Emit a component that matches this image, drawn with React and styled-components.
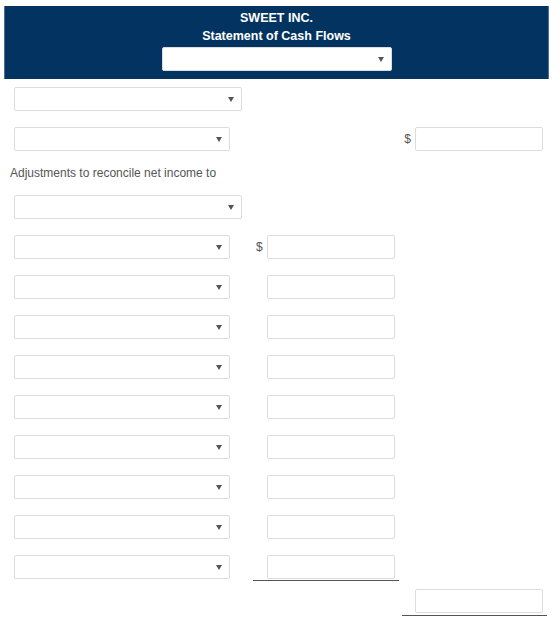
import React from "react";
import styled, { createGlobalStyle } from "styled-components";

const adjustmentRows = 9;

const App = () => {
  return (
    <Page>
      <GlobalStyle />
      <Header>
        <Title>SWEET INC.</Title>
        <Title>Statement of Cash Flows</Title>
        <Dropdown $width={230} $center />
      </Header>

      <Body>
        <Row $top={8}>
          <Dropdown $width={228} />
        </Row>

        <Row>
          <Dropdown $width={216} />
          <span />
          <span />
          <Dollar>$</Dollar>
          <Field />
        </Row>

        <Note>Adjustments to reconcile net income to</Note>

        <Row>
          <Dropdown $width={228} />
        </Row>

        {Array.from({ length: adjustmentRows }).map((_, i) => (
          <Row key={i}>
            <Dropdown $width={216} />
            {i === adjustmentRows - 1 ? (
              <Underlined>
                <span />
                <Field />
              </Underlined>
            ) : (
              <>
                <Dollar $left>{i === 0 ? "$" : ""}</Dollar>
                <Field />
              </>
            )}
          </Row>
        ))}

        <Row $top={10}>
          <span />
          <span />
          <span />
          <TotalCell>
            <Field />
          </TotalCell>
        </Row>
      </Body>
    </Page>
  );
};

const Dropdown = ({ $width, $center }) => (
  <SelectBox $width={$width} $center={$center}>
    <Caret />
  </SelectBox>
);

const GlobalStyle = createGlobalStyle`
  body {
    margin: 0;
    background: #fff;
    font-family: "Liberation Sans", Arial, sans-serif;
  }
`;

const Page = styled.div`
  width: 560px;
  padding: 6px 11px 0 4px;
  box-sizing: border-box;
`;

const Header = styled.div`
  background: #033360;
  border-left: 1px solid #4f6f91;
  border-right: 1px solid #4f6f91;
  padding: 3px 0 8px;
  display: flex;
  flex-direction: column;
  align-items: center;
`;

const Title = styled.div`
  color: #fff;
  font-weight: bold;
  font-size: 12.5px;
  line-height: 18px;
`;

const SelectBox = styled.div`
  width: ${(p) => p.$width}px;
  height: 24px;
  box-sizing: border-box;
  background: #fff;
  border: 1px solid #dcdcdc;
  border-radius: 2px;
  display: flex;
  align-items: center;
  justify-content: flex-end;
  padding-right: 7px;
  margin-top: ${(p) => (p.$center ? "2px" : "0")};
`;

const Caret = styled.span`
  width: 0;
  height: 0;
  border-left: 3px solid transparent;
  border-right: 3px solid transparent;
  border-top: 5px solid #555;
`;

const Body = styled.div`
  padding-left: 6px;
  display: flex;
  flex-direction: column;
`;

const Row = styled.div`
  display: grid;
  grid-template-columns: 239px 14px 128px 20px 128px;
  align-items: center;
  margin-top: ${(p) => (p.$top !== undefined ? p.$top : 16)}px;
  padding-left: 4px;
`;

const Dollar = styled.span`
  font-size: 12px;
  color: #555;
  text-align: ${(p) => (p.$left ? "left" : "right")};
  padding: ${(p) => (p.$left ? "0 0 0 3px" : "0 4px 0 0")};
`;

const Field = styled.div`
  width: 128px;
  height: 24px;
  box-sizing: border-box;
  border: 1px solid #dcdcdc;
  border-radius: 2px;
  background: #fff;
`;

const Note = styled.div`
  margin-top: 16px;
  font-size: 12px;
  line-height: 12px;
  color: #555;
`;

const Underlined = styled.div`
  grid-column: 2 / span 2;
  display: grid;
  grid-template-columns: 14px 128px;
  padding: 0 4px 1px 0;
  margin: 0 -4px -2px 0;
  border-bottom: 1px solid #555;
`;

const TotalCell = styled.div`
  grid-column: 4 / span 2;
  margin-right: -4px;
  padding: 0 4px 2px 13px;
  margin-left: -13px;
  width: 128px;
  border-bottom: 1px solid #555;
  justify-self: end;
`;

export default App;
